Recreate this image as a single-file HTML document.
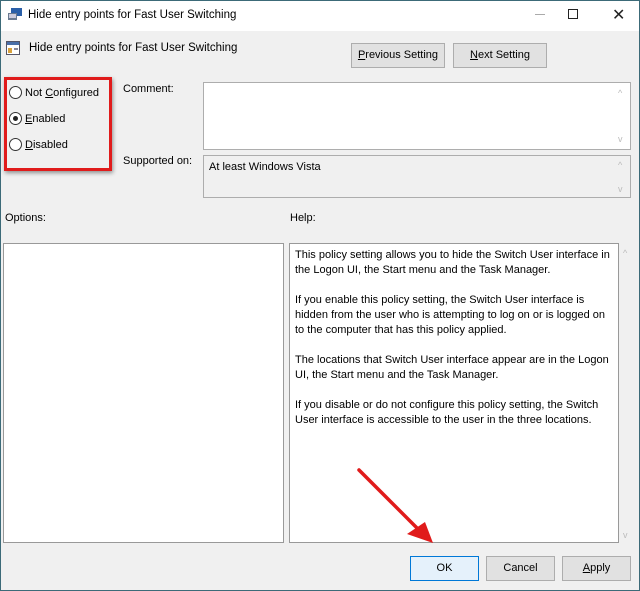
<!DOCTYPE html>
<html><head><style>
*{box-sizing:border-box;margin:0;padding:0}
body{width:640px;height:591px;background:#f0f0f0;font-family:"Liberation Sans",sans-serif;font-size:11px;color:#000;position:relative;overflow:hidden}
.a{position:absolute;white-space:nowrap}
.btn{position:absolute;background:#e1e1e1;border:1px solid #adadad;text-align:center;line-height:23px;font-size:11px}
.box{position:absolute;border:1px solid #adadad;background:#fff}
.radio{position:absolute;width:13px;height:13px;border:1px solid #333;border-radius:50%;background:#fff}
u{text-decoration:underline}
.sb{position:absolute;color:#bbb;font-size:9px}
</style></head><body>
<div class="a" style="left:0;top:0;width:640px;height:31px;background:#fff;border-top:1px solid #3c6a78;border-left:1px solid #3c6a78;border-right:1px solid #3c6a78"></div>
<div class="a" style="left:0;top:0;width:1px;height:591px;background:#3c6a78"></div>
<div class="a" style="right:0;top:0;width:1px;height:591px;background:#3c6a78"></div>
<div class="a" style="left:0;bottom:0;width:640px;height:1px;background:#3c6a78"></div>
<svg class="a" style="left:8px;top:7px" width="15" height="14"><rect x="3" y="1" width="11" height="8" fill="#2a5fa8"/><rect x="0" y="6" width="9" height="7" fill="#6a7a90"/><rect x="1" y="7" width="7" height="4" fill="#ccd"/></svg>
<div class="a" style="left:28px;top:9px;font-size:11.5px">Hide entry points for Fast User Switching</div>
<div class="a" style="left:535px;top:14px;width:10px;height:1px;background:#aaa"></div>
<div class="a" style="left:568px;top:9px;width:10px;height:10px;border:1px solid #222"></div>
<div class="a" style="left:612px;top:5px;font-size:16px;color:#222">✕</div>
<svg class="a" style="left:6px;top:41px" width="14" height="14"><rect x="0.5" y="0.5" width="13" height="13" fill="#fff" stroke="#556"/><rect x="1" y="1" width="12" height="3" fill="#4a6fa8"/><rect x="2" y="7" width="4" height="5" fill="#d9a23c"/><rect x="8" y="7" width="4" height="2" fill="#889"/></svg>
<div class="a" style="left:29px;top:42px;font-size:11.5px">Hide entry points for Fast User Switching</div>
<div class="btn" style="left:351px;top:43px;width:94px;height:25px"><u>P</u>revious Setting</div>
<div class="btn" style="left:453px;top:43px;width:94px;height:25px"><u>N</u>ext Setting</div>
<div class="a" style="left:4px;top:77px;width:108px;height:94px;border:3px solid #e01b1b;box-shadow:1px 2px 4px rgba(0,0,0,.4)"></div>
<div class="radio" style="left:9px;top:86px"></div>
<div class="a" style="left:25px;top:87px">Not <u>C</u>onfigured</div>
<div class="radio" style="left:9px;top:112px"><div style="position:absolute;left:3px;top:3px;width:5px;height:5px;border-radius:50%;background:#222"></div></div>
<div class="a" style="left:25px;top:113px"><u>E</u>nabled</div>
<div class="radio" style="left:9px;top:138px"></div>
<div class="a" style="left:25px;top:139px"><u>D</u>isabled</div>
<div class="a" style="left:123px;top:83px">Comment:</div>
<div class="box" style="left:203px;top:82px;width:428px;height:68px"></div>
<div class="sb" style="left:618px;top:88px">^</div><div class="sb" style="left:618px;top:134px">v</div>
<div class="a" style="left:123px;top:155px">Supported on:</div>
<div class="box" style="left:203px;top:155px;width:428px;height:43px;background:#f0f0f0"></div>
<div class="a" style="left:209px;top:161px">At least Windows Vista</div>
<div class="sb" style="left:618px;top:160px">^</div><div class="sb" style="left:618px;top:184px">v</div>
<div class="a" style="left:5px;top:212px">Options:</div>
<div class="a" style="left:290px;top:212px">Help:</div>
<div class="box" style="left:3px;top:243px;width:281px;height:300px;border-color:#999"></div>
<div class="box" style="left:289px;top:243px;width:330px;height:300px;border-color:#999"></div>
<div class="sb" style="left:623px;top:248px">^</div><div class="sb" style="left:623px;top:530px">v</div>
<div class="a" style="left:295px;top:248px;font-size:11px;line-height:15px;white-space:pre">This policy setting allows you to hide the Switch User interface in
the Logon UI, the Start menu and the Task Manager.

If you enable this policy setting, the Switch User interface is
hidden from the user who is attempting to log on or is logged on
to the computer that has this policy applied.

The locations that Switch User interface appear are in the Logon
UI, the Start menu and the Task Manager.

If you disable or do not configure this policy setting, the Switch
User interface is accessible to the user in the three locations.</div>
<div class="btn" style="left:410px;top:556px;width:69px;height:25px;background:#e5f1fb;border-color:#0078d7">OK</div>
<div class="btn" style="left:486px;top:556px;width:69px;height:25px">Cancel</div>
<div class="btn" style="left:562px;top:556px;width:69px;height:25px"><u>A</u>pply</div>
<svg class="a" style="left:0;top:0" width="640" height="591"><line x1="359" y1="470" x2="422" y2="533" stroke="#e01b1b" stroke-width="3.5" stroke-linecap="round"/><polygon points="433,543 407,534 425,522" fill="#e01b1b"/></svg>
</body></html>
